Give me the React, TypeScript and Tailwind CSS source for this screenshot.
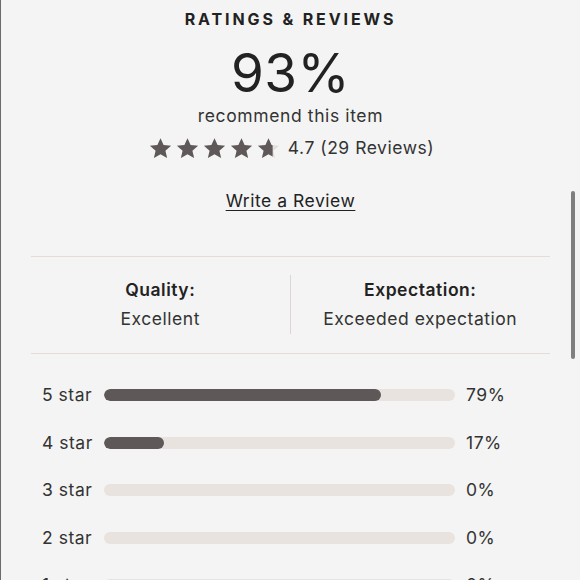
import React from "react";

const font = { fontFamily: "Inter, 'Liberation Sans', sans-serif" };

const distribution = [
  { label: "5 star", pct: 79 },
  { label: "4 star", pct: 17 },
  { label: "3 star", pct: 0 },
  { label: "2 star", pct: 0 },
  { label: "1 star", pct: 0 },
];

function Star({ fill = 1 }: { fill?: number }) {
  const id = `clip-${Math.round(fill * 100)}`;
  const d =
    "M12 1.2l3.2 7.2 7.8.7-5.9 5.2 1.8 7.7L12 18l-6.9 4 1.8-7.7L1 9.1l7.8-.7z";
  return (
    <svg width="23" height="23" viewBox="0 0 24 24">
      <defs>
        <clipPath id={id}>
          <rect x="0" y="0" width={24 * fill} height="24" />
        </clipPath>
      </defs>
      <path d={d} fill="#e3dedb" />
      <path d={d} fill="#5f5859" clipPath={`url(#${id})`} />
    </svg>
  );
}

export default function App() {
  return (
    <div
      className="relative h-[580px] w-[580px] overflow-hidden border-l border-[#6b6b6b] bg-[#f4f4f4] text-[#222]"
      style={font}
    >
      {/* Summary */}
      <div className="flex flex-col items-center">
        <h2 className="mt-[9px] text-[16px] font-bold leading-[20px] tracking-[0.18em]">
          RATINGS &amp; REVIEWS
        </h2>
        <div className="mt-[14px] text-[53px] font-normal leading-[60px] tracking-[0.01em]">
          93%
        </div>
        <p className="mt-[1px] text-[17.5px] leading-[24px] tracking-[0.035em] text-[#333]">
          recommend this item
        </p>
        <div className="mt-[7px] flex items-center">
          <div className="ml-[2px] flex gap-[4px]">
            <Star />
            <Star />
            <Star />
            <Star />
            <Star fill={0.68} />
          </div>
          <span className="ml-[8px] text-[17.5px] tracking-[0.03em] text-[#333]">
            4.7 (29 Reviews)
          </span>
        </div>
        <a className="mt-[28px] text-[17.5px] leading-[24px] tracking-[0.03em] text-[#222] underline underline-offset-[3px]">
          Write a Review
        </a>
      </div>

      {/* Attributes */}
      <div className="mx-[30px] mt-[43px] border-y border-[#e3dcd9] pb-[19px] pt-[18px]">
        <div className="grid grid-cols-2">
          <div className="flex flex-col items-center border-r border-[#dcd6d3] py-[2px]">
            <span className="text-[17.5px] font-semibold leading-[26px] tracking-[0.03em]">Quality:</span>
            <span className="mt-[3px] text-[17.5px] leading-[26px] tracking-[0.03em] text-[#333]">Excellent</span>
          </div>
          <div className="flex flex-col items-center py-[2px]">
            <span className="text-[17.5px] font-semibold leading-[26px] tracking-[0.03em]">Expectation:</span>
            <span className="mt-[3px] text-[17.5px] leading-[26px] tracking-[0.03em] text-[#333]">
              Exceeded expectation
            </span>
          </div>
        </div>
      </div>

      {/* Distribution */}
      <div className="mt-[29px] flex flex-col gap-[23.5px] pl-[41px]">
        {distribution.map((row) => (
          <div key={row.label} className="flex h-[24px] items-center">
            <span className="w-[62px] text-[17.5px] tracking-[0.03em] text-[#333]">{row.label}</span>
            <div className="h-[12px] w-[351px] overflow-hidden rounded-full bg-[#e8e3df]">
              <div className="h-full rounded-full bg-[#5f5859]" style={{ width: `${row.pct}%` }} />
            </div>
            <span className="ml-[11px] text-[17.5px] tracking-[0.03em] text-[#333]">{row.pct}%</span>
          </div>
        ))}
      </div>

      {/* Scrollbar thumb */}
      <div className="absolute right-[5px] top-[191px] h-[168px] w-[4px] rounded-full bg-[#7f7f7f]" />
    </div>
  );
}
